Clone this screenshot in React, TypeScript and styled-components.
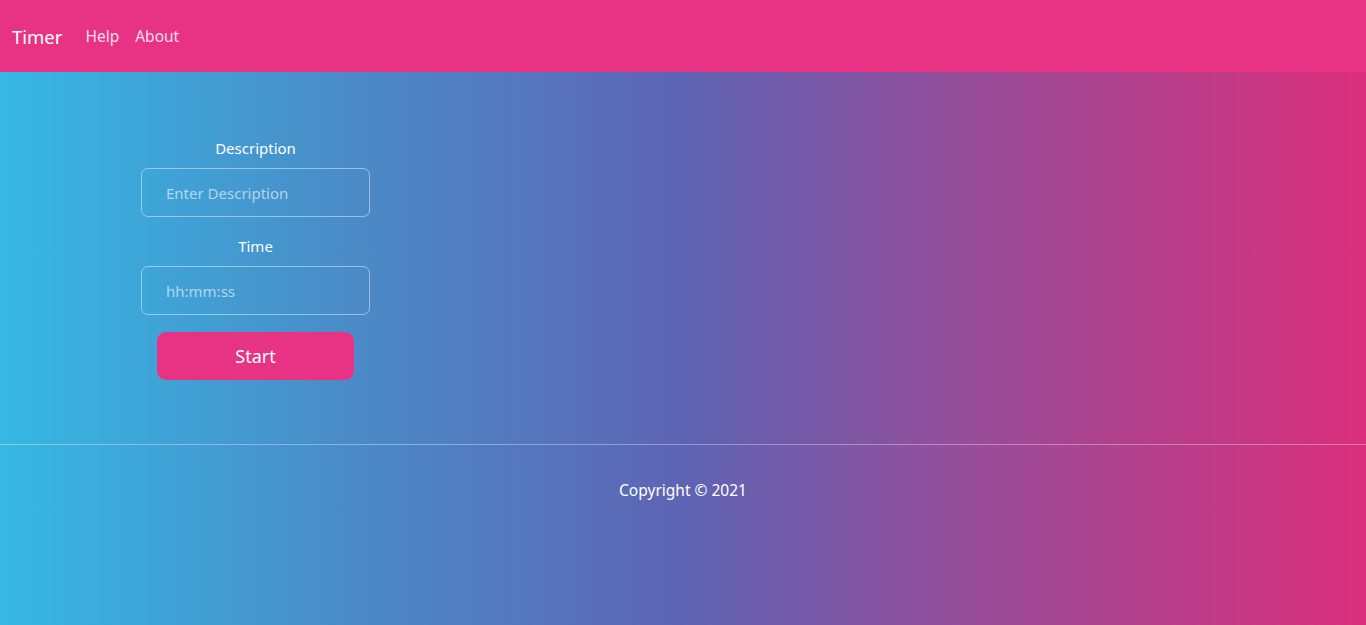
import React from 'react';
import styled, { createGlobalStyle } from 'styled-components';

const GlobalStyle = createGlobalStyle`
  html, body {
    margin: 0;
    padding: 0;
  }
  body {
    font-family: "Noto Sans", "Open Sans", sans-serif;
    color: #fff;
  }
  * {
    box-sizing: border-box;
  }
`;

const Page = styled.div`
  min-height: 625px;
  display: flex;
  flex-direction: column;
  background: linear-gradient(90deg, #35b8e4 0%, #4a8cc8 25%, #5e64b4 50%, #9a4c98 72%, #da2f7b 100%);
`;

const Navbar = styled.nav`
  height: 72px;
  background-color: #e83384;
  display: flex;
  align-items: center;
  padding: 0 12px;
`;

const Brand = styled.a`
  font-size: 18.5px;
  color: #fff;
  margin-right: 23px;
  text-decoration: none;
`;

const NavLink = styled.a`
  font-size: 15.5px;
  color: rgba(255, 255, 255, 0.85);
  margin-right: 16px;
  text-decoration: none;
`;

const Main = styled.main`
  height: 372px;
  padding: 66px 0 0 141px;
`;

const Form = styled.form`
  width: 229px;
  display: flex;
  flex-direction: column;
  align-items: center;
`;

const Label = styled.label`
  font-size: 15px;
  line-height: 20px;
  margin-bottom: 10px;
`;

const Input = styled.input`
  width: 100%;
  height: 49px;
  padding: 0 24px;
  border: 1px solid rgba(255, 255, 255, 0.45);
  border-radius: 7px;
  background: transparent;
  font-family: inherit;
  font-size: 15px;
  color: #fff;
  margin-bottom: ${(p: { $last?: boolean }) => (p.$last ? '17px' : '19px')};
  outline: none;

  &::placeholder {
    color: rgba(255, 255, 255, 0.6);
  }
`;

const StartButton = styled.button`
  width: 197px;
  height: 48px;
  border: none;
  border-radius: 9px;
  background-color: #e83384;
  color: #fff;
  font-family: inherit;
  font-size: 18px;
  cursor: pointer;
`;

const Footer = styled.footer`
  border-top: 1px solid rgba(255, 255, 255, 0.35);
  text-align: center;
  padding-top: 34px;
  font-size: 15.5px;
  flex: 1;
`;

const App = () => {
  return (
    <>
      <GlobalStyle />
      <Page>
        <Navbar>
          <Brand href="#">Timer</Brand>
          <NavLink href="#">Help</NavLink>
          <NavLink href="#">About</NavLink>
        </Navbar>
        <Main>
          <Form onSubmit={(e) => e.preventDefault()}>
            <Label>Description</Label>
            <Input placeholder="Enter Description" />
            <Label>Time</Label>
            <Input placeholder="hh:mm:ss" $last />
            <StartButton type="submit">Start</StartButton>
          </Form>
        </Main>
        <Footer>Copyright © 2021</Footer>
      </Page>
    </>
  );
};

export default App;
